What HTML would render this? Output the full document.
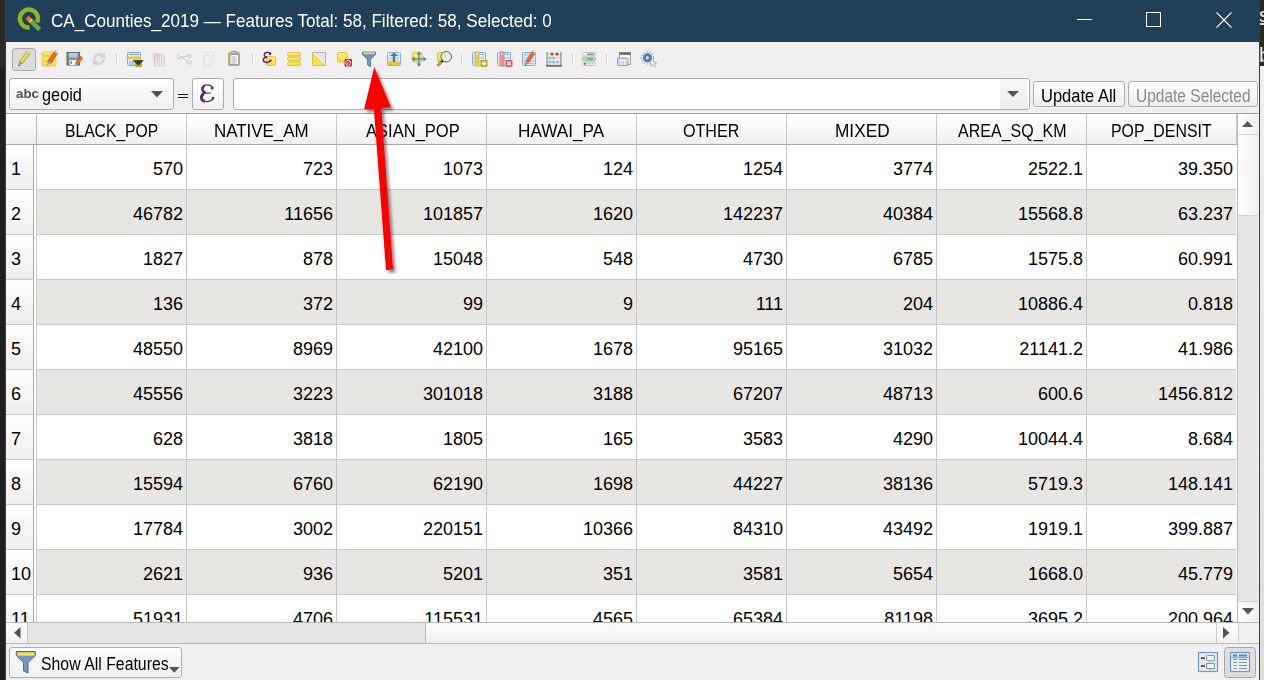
<!DOCTYPE html><html><head><meta charset="utf-8"><style>*{margin:0;padding:0;box-sizing:border-box}
html,body{width:1264px;height:680px;overflow:hidden;background:#1f1f1f;font-family:"Liberation Sans",sans-serif;position:relative}
#lstrip1{position:absolute;left:0;top:0;width:6px;height:67px;background:#2c2b2a}
#lstrip2{position:absolute;left:0;top:67px;width:6px;height:613px;background:#1f1f1f}
#rstrip1{position:absolute;left:1260px;top:0;width:4px;height:66px;background:#2b2926;overflow:hidden}
#rstrip2{position:absolute;left:1260px;top:66px;width:4px;height:614px;background:linear-gradient(#f0f0f0,#dcdcdc)}
.rs{position:absolute;left:-1px;color:#e8e8e8;font-size:20px;line-height:22px}
.s1{top:4px}.s2{top:44px}
#win{position:absolute;left:5px;top:0;width:1255px;height:680px;background:#f0f0f0;border-left:1px solid #25455f;border-right:1px solid #25455f}
.abs{position:absolute}
#title{position:absolute;left:6px;top:0;width:1253px;height:42px;background:#203f59}
#ttext{position:absolute;left:45px;top:10px;color:#fff;font-size:18px;white-space:nowrap;transform:scaleX(0.954);transform-origin:0 0}
.cell,.hc,.rh span{white-space:nowrap}
#tbl{position:absolute;left:6px;top:113px;width:1231px;height:509px;overflow:hidden;background:#fff;border-top:1px solid #a0a0a0}
.corner{position:absolute;left:0;top:0;width:31px;height:31px;background:linear-gradient(#fff,#f0f0f0);border-right:1px solid #b4b4b4;border-bottom:1px solid #a8a8a8}
.hc{position:absolute;top:0;width:150px;height:31px;background:linear-gradient(#fff,#efefef);border-right:1px solid #c8c8c8;border-bottom:1px solid #a8a8a8}
.ht{position:absolute;top:7px;font-size:18px;line-height:20px;color:#000;white-space:nowrap;transform-origin:0 0}
.rh{position:absolute;left:0;width:28px;height:45px;background:linear-gradient(#fff,#eeeeee);border-right:1px solid #a8a8a8;border-bottom:1px solid #c8c8c8}
.rh span{position:absolute;left:5px;top:14px;font-size:18px;line-height:20px;color:#000;white-space:nowrap}
.row{position:absolute;left:30px;width:1200px;height:45px;background:#fff}
.row.alt{background:#e8e6e3}
.cell{position:absolute;top:0;width:150px;height:45px;border-left:1px solid #c8c8c8;border-bottom:1px solid #c8c8c8}
.cell span{position:absolute;right:3px;top:14px;font-size:18px;line-height:20px;color:#000;white-space:nowrap}
.inp{position:absolute;border:1px solid #adadad;border-radius:3px}
.abc{left:16px;top:86px;font-size:14px;font-weight:bold;color:#555;letter-spacing:-0.3px}
.ftxt{font-size:18px;color:#000;white-space:nowrap}
.eps{left:200px;top:78px;font-size:26px;color:#5b2a6e;font-family:"Liberation Serif",serif}
.btn{position:absolute;border:1px solid #adadad;border-radius:3px;background:linear-gradient(#fdfdfd,#efefef);font-size:18px;color:#000}
.btn span{position:absolute;white-space:nowrap}

.tx{position:absolute;white-space:nowrap;transform-origin:0 0;font-family:"Liberation Sans",sans-serif}
</style></head><body>
<div id="lstrip1"></div><div id="lstrip2"></div><div id="rstrip1"><span class="rs s1">s</span><span class="rs s2">b</span><i style="position:absolute;left:0;top:23px;width:4px;height:1.5px;background:#ddd"></i></div><div id="rstrip2"></div>
<div id="win"></div>
<div id="title">
<svg class="abs" style="left:-6px;top:0" width="60" height="42" viewBox="0 0 60 42">
 <path d="M29.68 27.57 A9 9 0 1 1 37.06 22.40" fill="none" stroke="#8fb229" stroke-width="4.5"/>
 <path d="M27.2 17.2 L30.4 20.4" stroke="#f47a1e" stroke-width="4.4"/>
 <path d="M30.2 20.2 L31.6 21.6" stroke="#f0e040" stroke-width="4.4"/>
 <path d="M31.4 21.4 L39.6 29.6" stroke="#6aaa40" stroke-width="4.6"/>
</svg>

<div class="abs" style="left:1071px;top:19px;width:15px;height:1px;background:#fff"></div>
<div class="abs" style="left:1140px;top:12px;width:15px;height:15px;border:1px solid #fff"></div>
<svg class="abs" style="left:1210px;top:12px" width="16" height="16" viewBox="0 0 16 16"><path d="M0.5 0.5 L15.5 15.5 M15.5 0.5 L0.5 15.5" stroke="#fff" stroke-width="1.1"/></svg>
</div>
<!-- TOOLBAR -->
<div class="abs" style="left:12px;top:48px;width:24px;height:23px;background:#dcdcdc;border:1px solid #a8a8a8;border-radius:3px"></div>
<svg class="abs" style="left:0;top:0" width="700" height="80" viewBox="0 0 700 80">
<defs>
 <linearGradient id="yel" x1="0" y1="0" x2="0" y2="1"><stop offset="0" stop-color="#fff07a"/><stop offset="1" stop-color="#f2d93a"/></linearGradient>
 <linearGradient id="gry" x1="0" y1="0" x2="0" y2="1"><stop offset="0" stop-color="#f8f8f8"/><stop offset="1" stop-color="#c8c8c8"/></linearGradient>
</defs>
<!-- 1 pencil (toggled) -->
<g transform="translate(23.5,59.2) rotate(36)">
 <rect x="-2" y="-7.6" width="4" height="11.6" fill="#e2d13c" stroke="#a89828" stroke-width="0.6"/>
 <path d="M-0.6 -7.6 V4" stroke="#f4ea90" stroke-width="0.8"/>
 <path d="M-2 4 L0 9 L2 4 Z" fill="#999"/>
 <path d="M-0.7 7.3 L0 9 L0.7 7.3Z" fill="#333"/>
 <rect x="-2" y="-9" width="4" height="1.5" fill="#f4f4f4" stroke="#999" stroke-width="0.5"/>
</g>
<!-- 2 multi edit -->
<g>
 <rect x="42" y="52" width="14" height="4" rx="1" fill="url(#yel)" stroke="#e0c030" stroke-width="0.8"/>
 <rect x="42" y="57" width="14" height="4" rx="1" fill="url(#yel)" stroke="#e0c030" stroke-width="0.8"/>
 <rect x="42" y="62" width="14" height="4" rx="1" fill="url(#yel)" stroke="#e0c030" stroke-width="0.8"/>
</g>
<g transform="translate(51.5,59) rotate(34)">
 <rect x="-1.8" y="-7.6" width="3.6" height="11.6" fill="#e8702a" stroke="#a04010" stroke-width="0.6"/>
 <path d="M-1.8 4 L0 8.8 L1.8 4 Z" fill="#a8a8a8"/>
 <rect x="-1.8" y="-9" width="3.6" height="1.5" fill="#f4f4f4" stroke="#999" stroke-width="0.5"/>
</g>
<!-- 3 save -->
<rect x="66" y="51.5" width="14.5" height="14.5" rx="1" fill="#f4ec60"/>
<rect x="67" y="52.5" width="12.5" height="12.5" fill="#6f93b7" stroke="#44607c" stroke-width="0.8"/>
<rect x="69" y="53" width="8.5" height="4.5" fill="#c8c8c8"/>
<rect x="69.5" y="60" width="7" height="5" fill="#f4f4f4"/>
<rect x="70.5" y="61" width="1.5" height="3" fill="#6f93b7"/>
<g transform="translate(78.2,61.8) rotate(34)">
 <rect x="-1.5" y="-5.6" width="3" height="8" fill="#e8702a" stroke="#a04010" stroke-width="0.5"/>
 <path d="M-1.5 2.4 L0 5.8 L1.5 2.4 Z" fill="#999"/>
</g>
<!-- 4 reload disabled -->
<g fill="none" stroke="#d3d6d9" stroke-width="2.8">
 <path d="M94.5 59 A5 5 0 0 1 103 55.5"/>
 <path d="M103.5 59 A5 5 0 0 1 95 62.5"/>
</g>
<path d="M105.5 52 L105.5 58.5 L99.5 57.5 Z" fill="#d3d6d9"/>
<path d="M92.5 66 L92.5 59.5 L98.5 60.5 Z" fill="#d3d6d9"/>
<!-- separators -->
<g stroke="#d0d0d0" stroke-width="1">
 <path d="M116.5 54 V65"/><path d="M252.5 54 V65"/><path d="M461.5 54 V65"/><path d="M572.5 54 V65"/><path d="M606.5 54 V65"/>
</g>
<g stroke="#ffffff" stroke-width="1">
 <path d="M117.5 54 V65"/><path d="M253.5 54 V65"/><path d="M462.5 54 V65"/><path d="M573.5 54 V65"/><path d="M607.5 54 V65"/>
</g>
<!-- 6 add feature table -->
<rect x="127.5" y="52.5" width="13" height="13" rx="1" fill="#dfeaf7" stroke="#7aa7dd" stroke-width="1"/>
<path d="M129 54.5 H139 M129 62 H134 M129 64 H134" stroke="#7aa7dd" stroke-width="1"/>
<rect x="126.5" y="56.5" width="15" height="3" rx="1" fill="#e8c43a"/>
<rect x="135" y="60" width="7" height="7" rx="1" fill="#c8a010"/>
<path d="M132.5 60.2 H144 L138.2 65.5 Z" fill="#3a3a3a"/>
<!-- 7 trash disabled -->
<rect x="152.5" y="52.5" width="7" height="9" rx="1" fill="#e4e2dc"/>
<rect x="154" y="54" width="10.5" height="1.2" fill="#dcc8c8"/>
<rect x="154.5" y="56" width="9.5" height="10" rx="1" fill="none" stroke="#dcc8c8" stroke-width="1.2"/>
<path d="M157 57 V65 M159.3 57 V65 M161.6 57 V65" stroke="#dcc8c8" stroke-width="1"/>
<!-- 8 scissors disabled -->
<g fill="none" stroke="#d0c4c4" stroke-width="1">
 <path d="M177 54 L189 62.5 M177 58.5 L189 55.5"/>
 <circle cx="189.5" cy="56" r="1.8"/><circle cx="189.5" cy="62.5" r="1.8"/>
</g>
<!-- 9 copy disabled -->
<path d="M207 52 H212 L214 54 V62 H207 Z" fill="#f2f2f2" stroke="#dcdcdc" stroke-width="0.8"/>
<path d="M203.5 55.5 H209 L211 57.5 V66 H203.5 Z" fill="#eeeeee" stroke="#d8d8d8" stroke-width="0.8"/>
<!-- 10 paste -->
<rect x="228.5" y="52.5" width="11" height="13" rx="1" fill="#d9b06a" stroke="#c89a50" stroke-width="0.8"/>
<rect x="230" y="54.5" width="8.5" height="10" fill="#fafafa" stroke="#888" stroke-width="0.7"/>
<rect x="231" y="51" width="6" height="3" rx="1" fill="#bbb" stroke="#888" stroke-width="0.5"/>
<path d="M231.5 57 H236 M231.5 59 H237 M231.5 61 H237 M231.5 63 H236" stroke="#999" stroke-width="0.8"/>
<!-- 12 epsilon select -->
<rect x="266.5" y="56.5" width="9" height="9" rx="1.2" fill="url(#yel)" stroke="#d8b830" stroke-width="0.8"/>
<g transform="translate(142.6,1.1) scale(0.6)">
<path d="M212.8 87.2 C210.5 84.8, 203.2 84.6, 202.7 89.2 C202.4 92, 204.6 93.4, 207.8 93.3" fill="none" stroke="#5b2a6e" stroke-width="2.3"/>
<path d="M207.8 93.5 C203 93.4, 200.8 95.8, 201.2 98.6 C201.6 101.6, 205 102.6, 208 102.1 C210.8 101.6, 212.6 100.4, 213.8 98.6" fill="none" stroke="#5b2a6e" stroke-width="2.7"/>
<circle cx="212.4" cy="87.6" r="2.2" fill="#5b2a6e"/><circle cx="213.2" cy="99.2" r="1.8" fill="#5b2a6e"/>
</g>
<!-- 13 select all -->
<rect x="287.5" y="52.5" width="13" height="3.6" rx="1.5" fill="url(#yel)" stroke="#d8b830" stroke-width="0.8"/>
<rect x="287.5" y="57.2" width="13" height="3.6" rx="1.5" fill="url(#yel)" stroke="#d8b830" stroke-width="0.8"/>
<rect x="287.5" y="62" width="13" height="3.6" rx="1.5" fill="url(#yel)" stroke="#d8b830" stroke-width="0.8"/>
<!-- 14 invert -->
<rect x="312.5" y="52.5" width="13" height="13" fill="#e6e6e6" stroke="#aaa" stroke-width="0.8"/>
<path d="M312.5 53 L325 65.5 H312.5 Z" fill="#f8e24a" stroke="#d8b830" stroke-width="0.6"/>
<path d="M313.5 52.5 L325.5 64.5" stroke="#fff" stroke-width="0.8"/>
<!-- 15 deselect -->
<rect x="337.5" y="52.5" width="9.5" height="9.5" rx="1.5" fill="url(#yel)" stroke="#d8b830" stroke-width="0.8"/>
<rect x="344.5" y="59" width="7.5" height="7.5" rx="1" fill="#d42020"/>
<circle cx="348.2" cy="62.8" r="2.5" fill="none" stroke="#fff" stroke-width="0.8"/>
<path d="M346.5 64.5 L350 61" stroke="#fff" stroke-width="0.8"/>
<!-- 16 funnel -->
<path d="M362.5 52 H375.5 V54.5 L370.6 59.5 V66.5 L367.5 65 V59.5 L362.5 54.5 Z" fill="#6f97c6" stroke="#4a6e9a" stroke-width="0.8"/>
<rect x="363.5" y="52.3" width="11" height="1.8" fill="#f6e23a"/>
<!-- 17 move selection to top -->
<rect x="387.5" y="52.5" width="13" height="13" rx="1" fill="#e8f0f8" stroke="#88aee0" stroke-width="1"/>
<path d="M389 55 H399 M389 58 H399 M389 61 H399" stroke="#8ab0d8" stroke-width="0.8"/>
<rect x="388" y="62" width="12" height="3" fill="#e8c43a"/>
<path d="M394 52.5 L398 56 H395.2 V62 H392.8 V56 H390 Z" fill="#4c78ae"/>
<!-- 18 pan to selected -->
<rect x="412.5" y="52.5" width="9.5" height="9.5" rx="1.5" fill="url(#yel)" stroke="#d8b830" stroke-width="0.8"/>
<g fill="#5a8ac0">
 <path d="M419 51.2 L421.6 54.6 H416.4 Z"/>
 <path d="M419 66.8 L421.6 63.4 H416.4 Z"/>
 <path d="M411.2 59 L414.6 56.4 V61.6 Z"/>
 <path d="M426.8 59 L423.4 56.4 V61.6 Z"/>
 <rect x="418.3" y="54" width="1.4" height="10"/><rect x="414" y="58.3" width="10" height="1.4"/>
</g>
<!-- 19 zoom to selected -->
<rect x="437.5" y="52.5" width="8.5" height="9" rx="1.5" fill="url(#yel)" stroke="#d8b830" stroke-width="0.8"/>
<defs><linearGradient id="lens" x1="0" y1="0" x2="1" y2="0"><stop offset="0" stop-color="#f4f2e4"/><stop offset="0.45" stop-color="#e2dcb8"/><stop offset="0.5" stop-color="#ececec"/><stop offset="1" stop-color="#e8e8e8"/></linearGradient></defs><circle cx="446.2" cy="56.8" r="5.3" fill="url(#lens)" stroke="#555" stroke-width="0.9"/>
<path d="M442.8 60.5 L437.8 65.8" stroke="#222" stroke-width="2.4"/>
<path d="M441.5 62 L437.8 65.8" stroke="#f0c020" stroke-width="1.4"/>
<!-- 21 new field -->
<rect x="472.5" y="52.5" width="13" height="13" rx="1" fill="#dfeaf7" stroke="#88aee0" stroke-width="1"/>
<path d="M478 54.5 H484 M473.5 58 H484 M473.5 61 H484" stroke="#8ab0d8" stroke-width="0.8"/>
<rect x="475" y="51.5" width="4" height="15" rx="1.5" fill="#e6cc60" stroke="#d0b040" stroke-width="0.6"/><rect x="476.4" y="53.2" width="1.3" height="1.3" fill="#fff"/>
<rect x="480.5" y="60" width="7" height="7" rx="1" fill="#c8a010"/>
<circle cx="484" cy="63.5" r="1.6" fill="#fff"/><path d="M484 60.8 V66.2 M481.3 63.5 H486.7 M482.1 61.6 L485.9 65.4 M485.9 61.6 L482.1 65.4" stroke="#fff" stroke-width="0.7"/>
<!-- 22 delete field -->
<rect x="497.5" y="52.5" width="13" height="13" rx="1" fill="#dfeaf7" stroke="#88aee0" stroke-width="1"/>
<path d="M503 54.5 H509 M498.5 58 H509 M498.5 61 H509" stroke="#8ab0d8" stroke-width="0.8"/>
<rect x="500" y="51.5" width="4" height="15" rx="1.5" fill="#e69898" stroke="#d07878" stroke-width="0.6"/><rect x="501.4" y="53.2" width="1.3" height="1.3" fill="#fff"/>
<rect x="505.5" y="60" width="7" height="7" rx="1.2" fill="#e05a5a"/>
<path d="M507.2 61.7 L510.8 65.3 M510.8 61.7 L507.2 65.3" stroke="#fff" stroke-width="1.2"/>
<!-- 23 table + pencil -->
<rect x="522.5" y="52.5" width="13" height="13" rx="1" fill="#dfeaf7" stroke="#88aee0" stroke-width="1"/>
<path d="M524 55 H534 M524 58 H534 M524 61 H534 M524 63.5 H534" stroke="#8ab0d8" stroke-width="0.8"/>
<g transform="translate(529.3,58.8) rotate(33)">
 <rect x="-1.6" y="-7.8" width="3.2" height="11.6" fill="#e8702a" stroke="#a04010" stroke-width="0.5"/>
 <path d="M-1.6 3.8 L0 8.6 L1.6 3.8 Z" fill="#999"/>
 <path d="M-0.6 7 L0 8.6 L0.6 7Z" fill="#333"/>
 <rect x="-1.6" y="-9.2" width="3.2" height="1.4" fill="#f4f4f4" stroke="#999" stroke-width="0.4"/>
</g>
<!-- 24 abacus -->
<rect x="546.5" y="52" width="1.2" height="14" fill="#888"/><rect x="560.3" y="52" width="1.2" height="14" fill="#888"/>
<rect x="546" y="64.8" width="16" height="2" fill="#777"/>
<path d="M547.5 54 H560.5 M547.5 58 H560.5 M547.5 62 H560.5" stroke="#bbb" stroke-width="0.6"/>
<circle cx="552" cy="54" r="1.6" fill="#d03030"/><circle cx="557" cy="54" r="1.6" fill="#d03030"/>
<circle cx="550" cy="58" r="1.6" fill="#90d090"/><circle cx="553.5" cy="58" r="1.6" fill="#90d090"/>
<circle cx="550" cy="62" r="1.6" fill="#98b8d8"/><circle cx="553.5" cy="62" r="1.6" fill="#98b8d8"/><circle cx="557.5" cy="62" r="1.6" fill="#98b8d8"/>
<!-- 26 conditional formatting -->
<rect x="582.5" y="52.5" width="13" height="3.3" rx="1" fill="#fff" stroke="#aaa" stroke-width="0.7"/>
<path d="M587 54.2 H594" stroke="#555" stroke-width="1"/>
<rect x="582.5" y="57.2" width="13" height="3.5" rx="1" fill="#a8e8a8" stroke="#80c080" stroke-width="0.7"/>
<path d="M587 59 H593" stroke="#888" stroke-width="1.4"/>
<rect x="582.5" y="62.2" width="13" height="3.3" rx="1" fill="#fff" stroke="#aaa" stroke-width="0.7"/>
<path d="M585 63.8 H594" stroke="#f09090" stroke-width="0.8"/><circle cx="584.7" cy="63.8" r="0.9" fill="#c00"/>
<!-- 28 dock -->
<rect x="619.5" y="52.5" width="11" height="12" fill="#fafafa" stroke="#888" stroke-width="0.8"/>
<rect x="619.5" y="52.5" width="11" height="2.3" fill="#666"/>
<rect x="617.5" y="58" width="10.5" height="7.5" rx="1" fill="#c8daf0" stroke="#888" stroke-width="0.8"/>
<path d="M619 60 H627 M621 60 V65 M624.5 60 V65" stroke="#fff" stroke-width="0.7"/>
<!-- 29 actions -->
<circle cx="647.5" cy="57.8" r="6.2" fill="none" stroke="#999" stroke-width="0.9" stroke-dasharray="2 1"/>
<circle cx="647.5" cy="57.8" r="4.2" fill="#4a80c0" stroke="#2f5e98" stroke-width="0.6"/>
<path d="M646.3 55.8 L649.5 57.8 L646.3 59.8 Z" fill="#fff"/>
<path d="M650.5 59.5 L651 66 L652.8 64.3 L654.5 67 L656 66 L654.3 63.5 L656.8 63 Z" fill="#fff" stroke="#888" stroke-width="0.6"/>
</svg>

<!-- filter row -->
<div class="inp" style="left:9px;top:78px;width:165px;height:32px;background:linear-gradient(#fefefe,#f0f0f0)"></div>


<svg class="abs" style="left:151px;top:91px" width="12" height="7"><path d="M0 0 H12 L6 6.5 Z" fill="#555"/></svg>
<div class="abs" style="left:178px;top:94px;width:10px;height:1.3px;background:#000"></div>
<div class="abs" style="left:178px;top:97px;width:10px;height:1.3px;background:#000"></div>
<div class="inp" style="left:192px;top:78px;width:32px;height:32px;background:linear-gradient(#fefefe,#efefef)"></div>
<svg class="abs" style="left:0;top:0" width="260" height="120" viewBox="0 0 260 120">
<g fill="none" stroke="#5a2b6c">
<path d="M212.6 88 C211.8 85.8, 209.5 84.9, 207.2 84.9 C204 84.9, 202 86.8, 202 89 C202 91.2, 203.8 92.8, 206 93" stroke-width="1.2"/>
<path d="M204.5 93.1 H210.8" stroke-width="1.1"/>
<path d="M206 93 C203 93.2, 200.9 95.2, 200.9 97.6 C200.9 100.2, 203.4 101.6, 206.6 101.6 C209.8 101.6, 212.4 100, 213.8 97.6" stroke-width="1.2"/>
<path d="M204.8 85.5 C202.9 86.5, 202.2 88, 202.5 89.8 C202.9 91.2, 204 92.3, 205.5 92.8" stroke-width="2.4"/>
<path d="M203.8 93.8 C202 94.8, 201.3 96.4, 201.5 98.2 C201.8 100, 203 101, 204.8 101.4" stroke-width="2.8"/>
</g>
<circle cx="212.2" cy="87.9" r="1.5" fill="#5a2b6c"/><circle cx="213" cy="98" r="1.3" fill="#5a2b6c"/>
</svg>
<div class="inp" style="left:233px;top:78px;width:797px;height:32px;background:#fff"></div>
<div class="abs" style="left:1000px;top:79px;width:28px;height:30px;background:linear-gradient(#f8f8f8,#ececec);border-radius:0 2px 2px 0"></div>
<svg class="abs" style="left:1007px;top:91px" width="12" height="7"><path d="M0 0 H12 L6 6 Z" fill="#555"/></svg>
<div class="btn" style="left:1033px;top:81px;width:92px;height:26px"></div>
<div class="btn" style="left:1128px;top:81px;width:130px;height:26px;color:#888"></div>
<!-- vertical scrollbar -->
<div class="abs" style="left:1237px;top:113px;width:22px;height:1px;background:#a0a0a0"></div>
<div class="abs" style="left:1236px;top:114px;width:22px;height:508px;background:#e6e6e6;border-left:2px solid #b8b8b8"></div>
<div class="abs" style="left:1238px;top:114px;width:20px;height:21px;background:linear-gradient(90deg,#fdfdfd,#f0f0f0);border-bottom:1px solid #d0d0d0"></div>
<svg class="abs" style="left:1242px;top:120.5px" width="12" height="7"><path d="M0 6 H11.2 L5.6 0 Z" fill="#555"/></svg>
<div class="abs" style="left:1238px;top:135px;width:20px;height:81px;background:linear-gradient(90deg,#fdfdfd,#f0f0f0);border-bottom:1px solid #d0d0d0"></div>
<div class="abs" style="left:1238px;top:601px;width:20px;height:21px;background:linear-gradient(90deg,#fdfdfd,#f0f0f0);border-top:1px solid #d0d0d0"></div>
<svg class="abs" style="left:1242px;top:608px" width="12" height="7"><path d="M0 0 H12 L6 6.5 Z" fill="#555"/></svg>
<!-- horizontal scrollbar -->
<div class="abs" style="left:6px;top:622px;width:1253px;height:22px;background:#e6e6e6;border-top:1px solid #b8b8b8;border-bottom:1px solid #b8b8b8"></div>
<div class="abs" style="left:6px;top:623px;width:22px;height:20px;background:linear-gradient(#fdfdfd,#f0f0f0);border-right:1px solid #c8c8c8"></div>
<svg class="abs" style="left:13.5px;top:627px" width="7" height="12"><path d="M6.5 0 V11.5 L0 5.75 Z" fill="#555"/></svg>
<div class="abs" style="left:425px;top:623px;width:794px;height:20px;background:linear-gradient(#fdfdfd,#f0f0f0);border-left:1px solid #b8b8b8"></div>
<div class="abs" style="left:1216px;top:623px;width:22px;height:20px;background:linear-gradient(#fdfdfd,#f0f0f0);border-left:1px solid #c8c8c8"></div>
<svg class="abs" style="left:1223px;top:627px" width="7" height="12"><path d="M0 0 V11.5 L6.5 5.75 Z" fill="#555"/></svg>
<div class="abs" style="left:1238px;top:623px;width:21px;height:20px;background:#f0f0f0;border-left:1px solid #d0d0d0"></div>
<!-- bottom bar -->
<div class="btn" style="left:9px;top:647px;width:173px;height:31px"></div>

<svg class="abs" style="left:0;top:640px" width="1264" height="40" viewBox="0 640 1264 40">
<!-- funnel -->
<path d="M16.3 651.5 H35.3 V655.5 L28 662.5 V673 L23.5 671 V662.5 L16.3 655.5 Z" fill="#6f97c6" stroke="#4a6e9a" stroke-width="1"/>
<rect x="17.3" y="652.3" width="17.2" height="3.4" fill="#f6e23a"/>
<path d="M169 667 H179.6 L174.3 672.8 Z" fill="#555"/>
<!-- form view icon -->
<rect x="1198.5" y="652.5" width="19" height="19" fill="#ece9e4" stroke="#6b9bd1" stroke-width="1.2"/>
<rect x="1206.6" y="655.5" width="7.8" height="5.2" rx="1.2" fill="#fff" stroke="#6b9bd1" stroke-width="1.1"/>
<rect x="1206.6" y="663.4" width="7.8" height="5.2" rx="1.2" fill="#fff" stroke="#6b9bd1" stroke-width="1.1"/>
<rect x="1201" y="657.3" width="3.8" height="1.8" fill="#27476e"/>
<rect x="1201" y="665.2" width="3.8" height="1.8" fill="#27476e"/>
<!-- table view toggled -->
<rect x="1224.5" y="647.5" width="31" height="30" rx="3" fill="#dedede" stroke="#a8a8a8" stroke-width="1"/>
<rect x="1230.5" y="652.5" width="19" height="19" fill="#f3eee8" stroke="#6b9bd1" stroke-width="1.2"/>
<rect x="1231.4" y="653.5" width="17.2" height="4" fill="#c4e0f4"/>
<path d="M1230.8 657.8 H1249.2" stroke="#6b9bd1" stroke-width="1"/>
<path d="M1233 655.5 H1237 M1239 655.5 H1247" stroke="#5a88c0" stroke-width="2.2"/><path d="M1233.2 659.5 H1237 M1239 659.5 H1247 M1233.2 662.5 H1237 M1239 662.5 H1247 M1233.2 665.5 H1237 M1239 665.5 H1247 M1233.2 668.5 H1237 M1239 668.5 H1247" stroke="#6b9bd1" stroke-width="1.1"/>
</svg>

<div id="tbl">
<div class="corner"></div>
<div class="hc" style="left:31px"></div>
<div class="hc" style="left:181px"></div>
<div class="hc" style="left:331px"></div>
<div class="hc" style="left:481px"></div>
<div class="hc" style="left:631px"></div>
<div class="hc" style="left:781px"></div>
<div class="hc" style="left:931px"></div>
<div class="hc" style="left:1081px"></div>
<div class="ht" style="left:59.23px;transform:scaleX(0.8705)">BLACK_POP</div>
<div class="ht" style="left:208.36px;transform:scaleX(0.9398)">NATIVE_AM</div>
<div class="ht" style="left:359.60px;transform:scaleX(0.9188)">ASIAN_POP</div>
<div class="ht" style="left:512.25px;transform:scaleX(0.9528)">HAWAI_PA</div>
<div class="ht" style="left:677.20px;transform:scaleX(0.8951)">OTHER</div>
<div class="ht" style="left:828.54px;transform:scaleX(0.9582)">MIXED</div>
<div class="ht" style="left:952.00px;transform:scaleX(0.8901)">AREA_SQ_KM</div>
<div class="ht" style="left:1105.32px;transform:scaleX(0.8823)">POP_DENSIT</div>
<div class="rh" style="top:31px"><span>1</span></div>
<div class="row" style="top:31px">
<div class="cell" style="left:0px"><span>570</span></div>
<div class="cell" style="left:150px"><span>723</span></div>
<div class="cell" style="left:300px"><span>1073</span></div>
<div class="cell" style="left:450px"><span>124</span></div>
<div class="cell" style="left:600px"><span>1254</span></div>
<div class="cell" style="left:750px"><span>3774</span></div>
<div class="cell" style="left:900px"><span>2522.1</span></div>
<div class="cell" style="left:1050px"><span>39.350</span></div>
</div>
<div class="rh" style="top:76px"><span>2</span></div>
<div class="row alt" style="top:76px">
<div class="cell" style="left:0px"><span>46782</span></div>
<div class="cell" style="left:150px"><span>11656</span></div>
<div class="cell" style="left:300px"><span>101857</span></div>
<div class="cell" style="left:450px"><span>1620</span></div>
<div class="cell" style="left:600px"><span>142237</span></div>
<div class="cell" style="left:750px"><span>40384</span></div>
<div class="cell" style="left:900px"><span>15568.8</span></div>
<div class="cell" style="left:1050px"><span>63.237</span></div>
</div>
<div class="rh" style="top:121px"><span>3</span></div>
<div class="row" style="top:121px">
<div class="cell" style="left:0px"><span>1827</span></div>
<div class="cell" style="left:150px"><span>878</span></div>
<div class="cell" style="left:300px"><span>15048</span></div>
<div class="cell" style="left:450px"><span>548</span></div>
<div class="cell" style="left:600px"><span>4730</span></div>
<div class="cell" style="left:750px"><span>6785</span></div>
<div class="cell" style="left:900px"><span>1575.8</span></div>
<div class="cell" style="left:1050px"><span>60.991</span></div>
</div>
<div class="rh" style="top:166px"><span>4</span></div>
<div class="row alt" style="top:166px">
<div class="cell" style="left:0px"><span>136</span></div>
<div class="cell" style="left:150px"><span>372</span></div>
<div class="cell" style="left:300px"><span>99</span></div>
<div class="cell" style="left:450px"><span>9</span></div>
<div class="cell" style="left:600px"><span>111</span></div>
<div class="cell" style="left:750px"><span>204</span></div>
<div class="cell" style="left:900px"><span>10886.4</span></div>
<div class="cell" style="left:1050px"><span>0.818</span></div>
</div>
<div class="rh" style="top:211px"><span>5</span></div>
<div class="row" style="top:211px">
<div class="cell" style="left:0px"><span>48550</span></div>
<div class="cell" style="left:150px"><span>8969</span></div>
<div class="cell" style="left:300px"><span>42100</span></div>
<div class="cell" style="left:450px"><span>1678</span></div>
<div class="cell" style="left:600px"><span>95165</span></div>
<div class="cell" style="left:750px"><span>31032</span></div>
<div class="cell" style="left:900px"><span>21141.2</span></div>
<div class="cell" style="left:1050px"><span>41.986</span></div>
</div>
<div class="rh" style="top:256px"><span>6</span></div>
<div class="row alt" style="top:256px">
<div class="cell" style="left:0px"><span>45556</span></div>
<div class="cell" style="left:150px"><span>3223</span></div>
<div class="cell" style="left:300px"><span>301018</span></div>
<div class="cell" style="left:450px"><span>3188</span></div>
<div class="cell" style="left:600px"><span>67207</span></div>
<div class="cell" style="left:750px"><span>48713</span></div>
<div class="cell" style="left:900px"><span>600.6</span></div>
<div class="cell" style="left:1050px"><span>1456.812</span></div>
</div>
<div class="rh" style="top:301px"><span>7</span></div>
<div class="row" style="top:301px">
<div class="cell" style="left:0px"><span>628</span></div>
<div class="cell" style="left:150px"><span>3818</span></div>
<div class="cell" style="left:300px"><span>1805</span></div>
<div class="cell" style="left:450px"><span>165</span></div>
<div class="cell" style="left:600px"><span>3583</span></div>
<div class="cell" style="left:750px"><span>4290</span></div>
<div class="cell" style="left:900px"><span>10044.4</span></div>
<div class="cell" style="left:1050px"><span>8.684</span></div>
</div>
<div class="rh" style="top:346px"><span>8</span></div>
<div class="row alt" style="top:346px">
<div class="cell" style="left:0px"><span>15594</span></div>
<div class="cell" style="left:150px"><span>6760</span></div>
<div class="cell" style="left:300px"><span>62190</span></div>
<div class="cell" style="left:450px"><span>1698</span></div>
<div class="cell" style="left:600px"><span>44227</span></div>
<div class="cell" style="left:750px"><span>38136</span></div>
<div class="cell" style="left:900px"><span>5719.3</span></div>
<div class="cell" style="left:1050px"><span>148.141</span></div>
</div>
<div class="rh" style="top:391px"><span>9</span></div>
<div class="row" style="top:391px">
<div class="cell" style="left:0px"><span>17784</span></div>
<div class="cell" style="left:150px"><span>3002</span></div>
<div class="cell" style="left:300px"><span>220151</span></div>
<div class="cell" style="left:450px"><span>10366</span></div>
<div class="cell" style="left:600px"><span>84310</span></div>
<div class="cell" style="left:750px"><span>43492</span></div>
<div class="cell" style="left:900px"><span>1919.1</span></div>
<div class="cell" style="left:1050px"><span>399.887</span></div>
</div>
<div class="rh" style="top:436px"><span>10</span></div>
<div class="row alt" style="top:436px">
<div class="cell" style="left:0px"><span>2621</span></div>
<div class="cell" style="left:150px"><span>936</span></div>
<div class="cell" style="left:300px"><span>5201</span></div>
<div class="cell" style="left:450px"><span>351</span></div>
<div class="cell" style="left:600px"><span>3581</span></div>
<div class="cell" style="left:750px"><span>5654</span></div>
<div class="cell" style="left:900px"><span>1668.0</span></div>
<div class="cell" style="left:1050px"><span>45.779</span></div>
</div>
<div class="rh" style="top:481px"><span>11</span></div>
<div class="row" style="top:481px">
<div class="cell" style="left:0px"><span>51931</span></div>
<div class="cell" style="left:150px"><span>4706</span></div>
<div class="cell" style="left:300px"><span>115531</span></div>
<div class="cell" style="left:450px"><span>4565</span></div>
<div class="cell" style="left:600px"><span>65384</span></div>
<div class="cell" style="left:750px"><span>81198</span></div>
<div class="cell" style="left:900px"><span>3695.2</span></div>
<div class="cell" style="left:1050px"><span>200.964</span></div>
</div>
</div>
<div class="tx" style="left:50.85px;top:10.30px;font-size:18px;line-height:22px;color:#fff;transform:scaleX(0.9484)">CA_Counties_2019 — Features Total: 58, Filtered: 58, Selected: 0</div>
<div class="tx" style="left:1041.08px;top:84.50px;font-size:18px;line-height:22px;color:#000;transform:scaleX(0.9175)">Update All</div>
<div class="tx" style="left:1136.14px;top:84.50px;font-size:18px;line-height:22px;color:#8a8a8a;transform:scaleX(0.8611)">Update Selected</div>
<div class="tx" style="left:41.02px;top:653.00px;font-size:18px;line-height:22px;color:#000;transform:scaleX(0.8799)">Show All Features</div>
<div class="tx" style="left:41.59px;top:84.10px;font-size:18px;line-height:22px;color:#000;transform:scaleX(0.9071)">geoid</div>
<div class="tx" style="left:15.70px;top:85.50px;font-size:13px;line-height:16px;font-weight:bold;color:#505050;transform:scaleX(1.0273)">abc</div>
<svg class="abs" style="left:0;top:0;position:absolute" width="1264" height="680" viewBox="0 0 1264 680">
<defs><filter id="sh" x="-50%" y="-10%" width="200%" height="120%"><feDropShadow dx="2.5" dy="3" stdDeviation="1.6" flood-color="#000" flood-opacity="0.45"/></filter></defs>
<path d="M374.3 67 L391 107.3 L381.3 108.3 L393.1 269.6 L386 270 L373.9 108.9 L364.1 109.2 Z" fill="#ff0000" filter="url(#sh)"/>
</svg>

</body></html>
